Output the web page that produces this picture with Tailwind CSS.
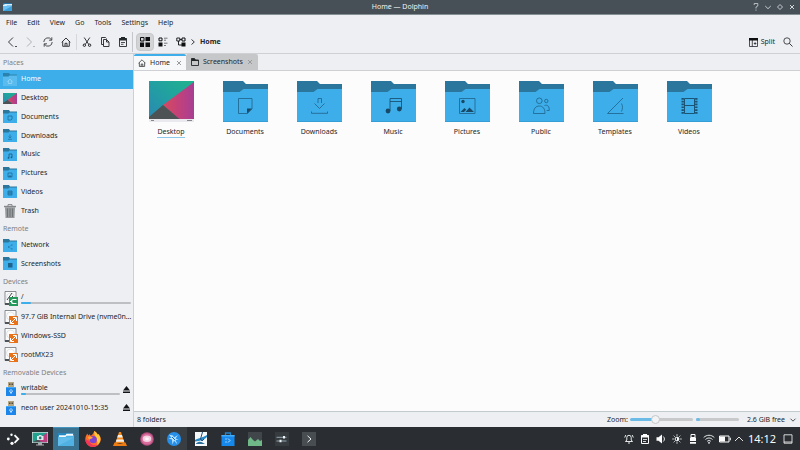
<!DOCTYPE html>
<html lang="en">
<head>
  <meta charset="UTF-8" />
  <meta name="viewport" content="width=device-width, initial-scale=1.0" />
  <title>Home — Dolphin</title>
  <script src="https://cdn.jsdelivr.net/npm/@tailwindcss/browser@4"></script>
</head>
<body class="h-screen flex flex-col overflow-hidden bg-[#eeeff2] font-['Noto_Sans',sans-serif] text-[7px] leading-[10px] text-[#232629]">

  <!-- shared icons -->
  <svg class="w-0 h-0 shrink-0">
    <linearGradient id="sky" x1="0" y1="1" x2="1" y2="0">
      <stop offset="0" stop-color="#2b86b4" />
      <stop offset=".5" stop-color="#229fa2" />
      <stop offset="1" stop-color="#1fb48c" />
    </linearGradient>
    <linearGradient id="dusk" x1="0" y1="0" x2="1" y2="0">
      <stop offset="0" stop-color="#d64a5f" />
      <stop offset=".5" stop-color="#c34179" />
      <stop offset="1" stop-color="#a73f94" />
    </linearGradient>
    <symbol id="folder" viewBox="0 0 45 41">
      <path d="M0 0h20l3 3h22v10H0z" fill="#2a769c" />
      <path d="M0 11h16.500l4-3H45v33H0z" fill="#3daee9" />
      <path d="M0 40.300h45v.7H0z" fill="#3498cd" />
    </symbol>
    <symbol id="folder-small" viewBox="0 0 14 13">
      <path d="M0 0h6l1 1.500h7V5H0z" fill="#2a769c" />
      <path d="M0 3.500h5.500l1-1H14V13H0z" fill="#3daee9" />
    </symbol>
    <symbol id="wallpaper" viewBox="0 0 45 41">
      <path d="M0 0h45v41H0z" fill="url(#sky)" />
      <path d="M45 1v38H31L14 24z" fill="url(#dusk)" />
      <path d="M14 24l17 14.500H0V36z" fill="#4d5254" />
      <path d="M0 38h45v3H0z" fill="#e9e9ee" />
      <path d="M2 39.500h3M38 39.500h5" stroke="#85888c" />
    </symbol>
    <symbol id="drive" viewBox="0 0 14 15">
      <path d="M1 .5h11v13H1z" fill="#fcfcfc" stroke="#6d7276" stroke-width=".8" />
      <path d="M1 12h11v2H1z" fill="#4d5357" />
      <circle cx="6.500" cy="6" r="4" fill="none" stroke="#d6d8da" stroke-width=".7" />
    </symbol>
    <symbol id="unmounted" viewBox="0 0 14 15">
      <use href="#drive" />
      <path d="M5 6h9v9H5z" fill="#e8721a" />
      <path d="M9 7.500h3.500V11M6.500 10v3.500H10M12 8l-5 5" fill="none" stroke="#fff" stroke-width="1" />
    </symbol>
    <symbol id="usb" viewBox="0 0 10 14">
      <path d="M2 0h6v5H2z" fill="#b3a582" />
      <path d="M3 1.500h1.500V3H3zM5.500 1.500H7V3H5.500z" fill="#514a39" />
      <path d="M0 5h10v9H0z" fill="#1d86ea" />
      <path d="M0 5h10v1H0z" fill="#46a9f5" />
      <path d="M5 7v5M3.500 8.500v1L5 11l1.500-1.500v-1" fill="none" stroke="#d5ecff" stroke-width=".8" />
    </symbol>
    <symbol id="eject" viewBox="0 0 7 7">
      <path d="M3.500 0L7 4.500H0zM0 5.500h7V7H0z" fill="#111416" />
    </symbol>
    <symbol id="house" viewBox="0 0 10 10">
      <path d="M.7 5.300L5 1l4.300 4.300M1.700 4.500v4.800h6.600V4.500M4 9V6.300h2V9" fill="none" stroke="currentColor" stroke-width=".9" />
    </symbol>
    <symbol id="close" viewBox="0 0 6 6">
      <path d="M1 1l4 4M5 1L1 5" fill="none" stroke="currentColor" stroke-width=".8" />
    </symbol>
  </svg>

  <!-- title bar -->
  <header class="h-[15px] shrink-0 grid grid-cols-[1fr_auto_1fr] items-center bg-[#475057] border-b border-[#859095] text-[#eff0f1] px-[3px]">
    <svg class="w-[9px] h-2" viewBox="0 0 9 8"><path d="M0 0h9v8H0z" fill="#3b9fdc" /><path d="M0 0h9v2H0z" fill="#2574a3" /><path d="M2 1h7v1.500H4L3.500 3H0V2z" fill="#d9f0fd" /><path d="M0 3h9L0 8z" fill="#68c1f2" /></svg>
    <h1>Home — Dolphin</h1>
    <div class="flex justify-end gap-[2px] text-[#d2d6d8]">
      <button aria-label="Help" class="w-[10px] h-[10px]"><svg viewBox="0 0 10 10"><path d="M3.200 3V1.500h3.600V4L5 5v1.500M5 7.500v1.200" fill="none" stroke="currentColor" stroke-width=".8" /></svg></button>
      <button aria-label="Minimize" class="w-[10px] h-[10px]"><svg viewBox="0 0 10 10"><path d="M2.200 4L5 6.700 7.800 4" fill="none" stroke="currentColor" stroke-width=".9" /></svg></button>
      <button aria-label="Maximize" class="w-[10px] h-[10px]"><svg viewBox="0 0 10 10"><path d="M5 2.500L7.500 5 5 7.500 2.500 5z" fill="none" stroke="currentColor" stroke-width=".9" /></svg></button>
      <button aria-label="Close" class="w-[10px] h-[10px]"><svg viewBox="0 0 10 10"><path d="M3 3l4 4M7 3L3 7" fill="none" stroke="currentColor" stroke-width="1" /></svg></button>
    </div>
  </header>

  <!-- menu bar -->
  <nav class="h-4 shrink-0 flex items-center gap-[10px] px-[6px]">
    <button>File</button>
    <button>Edit</button>
    <button>View</button>
    <button>Go</button>
    <button>Tools</button>
    <button>Settings</button>
    <button>Help</button>
  </nav>

  <!-- toolbar -->
  <div class="h-[23px] shrink-0 flex items-center justify-between border-b border-[#cfd0d3] px-[3px]">
    <div class="flex items-center">
      <button aria-label="Back" class="w-[18px] flex justify-center"><svg class="w-3 h-3" viewBox="0 0 12 12"><path d="M7 1.500L2.500 6 7 10.500" fill="none" stroke="currentColor" stroke-width=".9" /><path d="M9 10l1 1 1-1" fill="none" stroke="currentColor" stroke-width=".8" /></svg></button>
      <button aria-label="Forward" class="w-[18px] flex justify-center text-[#a4a7a9]"><svg class="w-3 h-3" viewBox="0 0 12 12"><path d="M3 1.500L7.500 6 3 10.500" fill="none" stroke="currentColor" stroke-width=".9" /><path d="M9 10l1 1 1-1" fill="none" stroke="currentColor" stroke-width=".8" /></svg></button>
      <button aria-label="Reload" class="w-[18px] flex justify-center"><svg class="w-[10px] h-[10px]" viewBox="0 0 10 10"><path d="M.8 5A4.200 4.200 0 0 1 8.500 2.700M9.200 5a4.200 4.200 0 0 1-7.700 2.300M8.800.3v2.900H6M1.200 9.700V6.800H4" fill="none" stroke="currentColor" stroke-width=".8" /></svg></button>
      <button aria-label="Home" class="w-[18px] flex justify-center"><svg class="w-[10px] h-[10px]"><use href="#house" /></svg></button>
      <span class="w-px h-4 bg-[#d6d7da] mx-px"></span>
      <button aria-label="Cut" class="w-[18px] flex justify-center"><svg class="w-[10px] h-[10px]" viewBox="0 0 10 10"><path d="M2.200.5l4.600 7M7.800.5l-4.600 7" fill="none" stroke="currentColor" stroke-width=".9" /><circle cx="2.400" cy="8.200" r="1.200" fill="none" stroke="currentColor" /><circle cx="7.600" cy="8.200" r="1.200" fill="none" stroke="currentColor" /></svg></button>
      <button aria-label="Copy" class="w-[18px] flex justify-center"><svg class="w-[10px] h-[10px]" viewBox="0 0 10 10"><path d="M3.500 7.500h-2v-7h4l1 1M3.500 2.500h3l2.500 2.500v4.500H3.500zM6.500 2.500V5H9" fill="none" stroke="currentColor" stroke-width=".9" /></svg></button>
      <button aria-label="Paste" class="w-[18px] flex justify-center"><svg class="w-[10px] h-[10px]" viewBox="0 0 10 10"><path d="M1.500 1.500h7v8h-7z" fill="none" stroke="currentColor" stroke-width=".9" /><path d="M1.500 1H3V0h4v1h1.500v2.500h-7z" fill="currentColor" /><path d="M3 5.500h4M3 7.300h2.500" stroke="currentColor" stroke-width=".8" /></svg></button>
      <span class="w-px h-5 bg-[#c4c6c9] mr-[3px]"></span>
      <button aria-label="Icons" class="w-[18px] h-[18px] flex items-center justify-center rounded-sm bg-[#d2d3d5] border border-[#c7c8ca]"><svg class="w-[10px] h-[10px]" viewBox="0 0 10 10"><path d="M5.500 0H10v4H5.500zM0 5.500h4V10H0zM5.500 5.500H10V10H5.500z" fill="#0d0f11" /><path d="M.5.5h3.500v3.500H.5z" fill="none" stroke="#0d0f11" /></svg></button>
      <button aria-label="Compact" class="w-[18px] flex justify-center"><svg class="w-[10px] h-[10px]" viewBox="0 0 10 10"><path d="M1 1h3v2.800H1z" fill="none" stroke="#0d0f11" /><path d="M.5 5.500h4v4h-4z" fill="#0d0f11" /><path d="M6 1.200h3.500M6 3.200h2M6 6.200h3.500M6 8.500h2" stroke="#54585b" stroke-width=".8" /></svg></button>
      <button aria-label="Tree" class="w-[18px] flex justify-center"><svg class="w-[10px] h-[10px]" viewBox="0 0 10 10"><path d="M.8 1h3v3h-3zM2.500 4v4H6M3.800 2.500H6" fill="none" stroke="#0d0f11" stroke-width=".9" /><path d="M6 1h3v3H6z" fill="none" stroke="#0d0f11" /><path d="M5.500 5.500h4v4h-4z" fill="#0d0f11" /></svg></button>
      <svg class="w-[6px] h-[6px] mr-1" viewBox="0 0 6 6"><path d="M1.500.5L4.300 3 1.500 5.500" fill="none" stroke="currentColor" stroke-width=".9" /></svg>
      <a href="#" class="font-bold">Home</a>
    </div>
    <div class="flex items-center gap-2 pr-1">
      <button class="flex items-center gap-[3px]">
        <svg class="w-[9px] h-[9px]" viewBox="0 0 9 9"><path d="M.5.5h8v8h-8zM3.300 2v6.500M4.800 5.500h2.600M6.100 4.200v2.600" fill="none" stroke="#232629" stroke-width=".8" /><path d="M0 0h9v2.500H0z" fill="#0d0f11" /></svg>
        Split
      </button>
      <button aria-label="Search" class="w-[10px] h-[10px]"><svg viewBox="0 0 10 10"><circle cx="4" cy="4" r="3.200" fill="none" stroke="currentColor" stroke-width=".8" /><path d="M6.300 6.300l3.200 3.200" stroke="currentColor" stroke-width=".9" /></svg></button>
    </div>
  </div>

  <div class="flex-1 min-h-0 flex">
    <!-- places panel -->
    <aside class="w-[134px] shrink-0 border-r border-[#cfd0d3]">
      <h2 class="h-4 pt-1 px-[3px] text-[#7d8184]">Places</h2>
      <ul class="h-[150px] grid auto-rows-fr">
        <li class="grid"><a href="#" class="flex items-center gap-1 px-[3px] bg-[#3daee9] text-[#fcfcfc]">
          <svg class="w-[14px] h-[13px]" viewBox="0 0 14 13"><path d="M0 0h6l1 1.500h7V5H0z" fill="#2a82af" /><path d="M0 3.500h5.500l1-1H14V13H0z" fill="#59bbee" /><path d="M4.500 8.500L7 6.300l2.500 2.200M5.300 8v2.500h3.400V8" fill="none" stroke="#a6ddf8" stroke-width=".7" /></svg>Home</a></li>
        <li class="grid"><a href="#" class="flex items-center gap-1 px-[3px]">
          <svg class="w-[14px] h-[11px]" viewBox="0 0 14 11"><path d="M0 0h14v11H0z" fill="url(#sky)" /><path d="M14 0v11H9.500L4.500 7z" fill="url(#dusk)" /><path d="M4.500 7l5 4H0v-1z" fill="#4d5254" /></svg>Desktop</a></li>
        <li class="grid"><a href="#" class="flex items-center gap-1 px-[3px]">
          <svg class="w-[14px] h-[13px]" viewBox="0 0 14 13"><use href="#folder-small" /><path d="M5 6h4v3L8 10H5z" fill="none" stroke="#1f6c97" stroke-width=".8" /></svg>Documents</a></li>
        <li class="grid"><a href="#" class="flex items-center gap-1 px-[3px]">
          <svg class="w-[14px] h-[13px]" viewBox="0 0 14 13"><use href="#folder-small" /><path d="M7 5.500v3M5.500 7.500L7 9l1.500-1.500M5 10.300h4" fill="none" stroke="#1f6c97" stroke-width=".7" /></svg>Downloads</a></li>
        <li class="grid"><a href="#" class="flex items-center gap-1 px-[3px]">
          <svg class="w-[14px] h-[13px]" viewBox="0 0 14 13"><use href="#folder-small" /><path d="M6 9.500V6h3v3" fill="none" stroke="#1a5b80" stroke-width=".8" /><circle cx="5.500" cy="9.800" r=".9" fill="#1a5b80" /><circle cx="8.500" cy="9.300" r=".9" fill="#1a5b80" /></svg>Music</a></li>
        <li class="grid"><a href="#" class="flex items-center gap-1 px-[3px]">
          <svg class="w-[14px] h-[13px]" viewBox="0 0 14 13"><use href="#folder-small" /><path d="M5 6h4v4H5z" fill="none" stroke="#1f6c97" stroke-width=".8" /><path d="M5 10l2-2 2 2z" fill="#1f6c97" /></svg>Pictures</a></li>
        <li class="grid"><a href="#" class="flex items-center gap-1 px-[3px]">
          <svg class="w-[14px] h-[13px]" viewBox="0 0 14 13"><use href="#folder-small" /><path d="M5 6h4v4H5zM5 8h4M6 6v4M8 6v4" fill="none" stroke="#1f6c97" stroke-width=".8" /></svg>Videos</a></li>
        <li class="grid"><a href="#" class="flex items-center gap-1 px-[3px]">
          <svg class="w-[14px] h-[14px]" viewBox="0 0 14 14"><path d="M5 2V.6h4V2" fill="none" stroke="#84888a" /><path d="M1 1.800h12v1.500H1z" fill="#84888a" /><path d="M2 3.300h10L11.500 14h-9z" fill="#96999b" /><path d="M4.500 4.500v8.500M7 4.500v8.500M9.500 4.500v8.500" stroke="#65696b" stroke-width=".8" /></svg>Trash</a></li>
      </ul>

      <h2 class="h-4 pt-1 px-[3px] text-[#7d8184]">Remote</h2>
      <ul class="h-[37px] grid auto-rows-fr">
        <li class="grid"><a href="#" class="flex items-center gap-1 px-[3px]">
          <svg class="w-[14px] h-[13px]" viewBox="0 0 14 13"><use href="#folder-small" /><path d="M9 6L5.500 8 9 10" fill="none" stroke="#2a82af" stroke-width=".6" /><path d="M8.500 5.500h1v1h-1zM5 7.500h1v1H5zM8.500 9.500h1v1h-1z" fill="#1f6c97" /></svg>Network</a></li>
        <li class="grid"><a href="#" class="flex items-center gap-1 px-[3px]">
          <svg class="w-[14px] h-[13px]" viewBox="0 0 14 13"><use href="#folder-small" /><path d="M5 6h4.500v4.500H5z" fill="#1d648c" /></svg>Screenshots</a></li>
      </ul>

      <h2 class="h-4 pt-1 px-[3px] text-[#7d8184]">Devices</h2>
      <ul class="h-[75px] grid auto-rows-fr">
        <li class="grid"><a href="#" class="flex items-center gap-[3px] pl-1 pr-[2px]">
          <svg class="w-[14px] h-[15px] shrink-0" viewBox="0 0 14 15"><use href="#drive" /><path d="M3 9l5-7M5 9l4-4" stroke="#31363b" stroke-width=".9" /><path d="M5 6h9v9H5z" fill="#23995a" /><path d="M12.500 8.500H9.500a2 2 0 0 0 0 4h3M6 10.500h1.500" fill="none" stroke="#fff" stroke-width="1.200" /></svg>
          <span class="flex-1">/<span class="block h-[2px] rounded-full bg-[#bdbfc2]"><span class="block h-full rounded-full bg-[#3daee9]" style="width: 9%"></span></span></span></a></li>
        <li class="grid"><a href="#" class="min-w-0 flex items-center gap-[3px] pl-1">
          <svg class="w-[14px] h-[15px] shrink-0"><use href="#unmounted" /></svg><span class="whitespace-nowrap">97.7 GiB Internal Drive (nvme0n…</span></a></li>
        <li class="grid"><a href="#" class="flex items-center gap-[3px] pl-1">
          <svg class="w-[14px] h-[15px]"><use href="#unmounted" /></svg>Windows-SSD</a></li>
        <li class="grid"><a href="#" class="flex items-center gap-[3px] pl-1">
          <svg class="w-[14px] h-[15px]"><use href="#unmounted" /></svg>rootMX23</a></li>
      </ul>

      <h2 class="h-4 pt-1 px-[3px] text-[#7d8184]">Removable Devices</h2>
      <ul class="h-[37px] grid auto-rows-fr">
        <li class="flex items-center gap-[3px] pl-[6px] pr-[3px]">
          <a href="#" class="flex-1 flex items-center gap-[5px]"><svg class="w-[10px] h-[14px]"><use href="#usb" /></svg>
          <span class="flex-1">writable<span class="block h-[2px] rounded-full bg-[#bdbfc2]"><span class="block h-full rounded-full bg-[#3daee9]" style="width: 5%"></span></span></span></a>
          <button aria-label="Eject writable"><svg class="w-[7px] h-[7px]"><use href="#eject" /></svg></button></li>
        <li class="flex items-center gap-[3px] pl-[6px] pr-[3px]">
          <a href="#" class="flex-1 flex items-center gap-[5px]"><svg class="w-[10px] h-[14px]"><use href="#usb" /></svg>neon user 20241010-15:35</a>
          <button aria-label="Eject neon user"><svg class="w-[7px] h-[7px]"><use href="#eject" /></svg></button></li>
      </ul>
    </aside>

    <main class="flex-1 min-w-0 flex flex-col">
      <!-- tabs -->
      <div class="h-[17px] shrink-0 flex border-b border-[#cfd0d3]">
        <div class="flex items-center gap-1 px-1 bg-[#f7f8f9] border-t-2 border-[#3daee9] rounded-t-xs">
          <button class="flex items-center gap-1"><svg class="w-2 h-2"><use href="#house" /></svg>Home</button>
          <button aria-label="Close Home tab" class="ml-[2px]"><svg class="w-[6px] h-[6px] text-[#7d8184]"><use href="#close" /></svg></button>
        </div>
        <div class="flex items-center gap-1 px-[5px] bg-[#c6c7c9] rounded-t-xs">
          <button class="flex items-center gap-1"><svg class="w-2 h-2" viewBox="0 0 8 8"><path d="M.5 7.500v-7h3l1 1.500h3v5.500z" fill="none" stroke="currentColor" stroke-width=".9" /><path d="M.5.5h3l1 1.500h3v1H3L2.500 3h-2z" fill="currentColor" /></svg>Screenshots</button>
          <button aria-label="Close Screenshots tab"><svg class="w-[6px] h-[6px] text-[#8b8e91]"><use href="#close" /></svg></button>
        </div>
      </div>

      <!-- files -->
      <div class="flex-1 bg-[#fcfcfc] pt-[10px] flex flex-wrap content-start">
        <a href="#" class="w-[74px] flex flex-col items-center gap-[5px]"><svg class="w-[45px] h-[41px]"><use href="#wallpaper" /></svg><span class="border-b border-[#8cc9ea]">Desktop</span></a>
        <a href="#" class="w-[74px] flex flex-col items-center gap-[5px]"><svg class="w-[45px] h-[41px]" viewBox="0 0 45 41"><use href="#folder" /><path d="M15.500 17.500h13.500v10.500l-4.500 4.500h-9z" fill="none" stroke="#1f6189" stroke-width=".8" /><path d="M29 27.500l-5 5v-5z" fill="#184a68" /></svg><span>Documents</span></a>
        <a href="#" class="w-[74px] flex flex-col items-center gap-[5px]"><svg class="w-[45px] h-[41px]" viewBox="0 0 45 41"><use href="#folder" /><path d="M21 22v-4.500h3.500V22M17.500 22.500l5 5 5-5M14.500 30.500v1.800h16v-1.800" fill="none" stroke="#1f6189" stroke-width=".8" /></svg><span>Downloads</span></a>
        <a href="#" class="w-[74px] flex flex-col items-center gap-[5px]"><svg class="w-[45px] h-[41px]" viewBox="0 0 45 41"><use href="#folder" /><path d="M19 30V17.500h11.500V28M19 20.500h11.500" fill="none" stroke="#1a5376" stroke-width=".9" /><circle cx="17" cy="30" r="2.400" fill="#184a68" /><circle cx="28.300" cy="28" r="2.400" fill="#184a68" /></svg><span>Music</span></a>
        <a href="#" class="w-[74px] flex flex-col items-center gap-[5px]"><svg class="w-[45px] h-[41px]" viewBox="0 0 45 41"><use href="#folder" /><path d="M14.500 17.500h15.500v15h-15.500z" fill="none" stroke="#1f6189" stroke-width=".8" /><circle cx="18" cy="20.500" r="1.700" fill="#184a68" /><path d="M15.500 31l4-4 1.700 1.700L19 31zM20.500 31l4-4.500L29 31z" fill="#184a68" /></svg><span>Pictures</span></a>
        <a href="#" class="w-[74px] flex flex-col items-center gap-[5px]"><svg class="w-[45px] h-[41px]" viewBox="0 0 45 41"><use href="#folder" /><g fill="none" stroke="#1f6189" stroke-width=".8"><circle cx="20.300" cy="19.800" r="2.800" /><path d="M14.500 32.500c0-5 2.300-7.500 5.800-7.500s5.700 2.500 5.700 7.500z" /><circle cx="27.300" cy="20" r="1.700" /><path d="M25.500 24.500c3.200-1 5 1 4.700 5h-2.500" /></g></svg><span>Public</span></a>
        <a href="#" class="w-[74px] flex flex-col items-center gap-[5px]"><svg class="w-[45px] h-[41px]" viewBox="0 0 45 41"><use href="#folder" /><path d="M30 17L14.500 32.500H30.500M28.500 22.500c1.300 2.500 1.300 5 0 8" fill="none" stroke="#1f6189" stroke-width=".8" /></svg><span>Templates</span></a>
        <a href="#" class="w-[74px] flex flex-col items-center gap-[5px]"><svg class="w-[45px] h-[41px]" viewBox="0 0 45 41"><use href="#folder" /><path d="M17.500 17.500h10v15h-10zM17.500 24.500h10" fill="none" stroke="#184a68" stroke-width=".9" /><path d="M15.700 17v16M29.300 17v16" stroke="#1a5376" stroke-width="2.400" stroke-dasharray="1.700 1.100" /></svg><span>Videos</span></a>
      </div>

      <!-- status bar -->
      <footer class="h-4 shrink-0 flex items-center border-t border-[#c3cacd] px-[3px]">
        <span class="flex-1">8 folders</span>
        <label for="zoom" class="mr-[2px]">Zoom:</label>
        <input id="zoom" type="range" min="0" max="100" value="39" class="w-[63px] h-[3px] appearance-none rounded-full bg-linear-to-r from-[#6cbbe6] from-40% to-[#c7c9cb] to-40% [&::-webkit-slider-thumb]:appearance-none [&::-webkit-slider-thumb]:w-[9px] [&::-webkit-slider-thumb]:h-[9px] [&::-webkit-slider-thumb]:rounded-full [&::-webkit-slider-thumb]:bg-[#f2f3f4] [&::-webkit-slider-thumb]:border [&::-webkit-slider-thumb]:border-[#c3c6c8]" />
        <span class="ml-[3px] mr-2 w-[43px] h-[3px] rounded-full bg-[#c7c9cb]"><span class="block h-full rounded-full bg-[#6cbbe6]" style="width: 9%"></span></span>
        <span>2.6 GiB free</span>
        <button aria-label="Disk space details" class="ml-1 w-2"><svg class="w-2 h-2" viewBox="0 0 8 8"><path d="M1.500 2.700L4 5.200l2.500-2.500" fill="none" stroke="currentColor" stroke-width=".8" /></svg></button>
      </footer>
    </main>
  </div>

  <!-- taskbar -->
  <div class="h-[23px] shrink-0 flex justify-between bg-[#2a2e32] text-[#fcfcfc]">
    <div class="flex">
      <button aria-label="Application Launcher" class="w-[26px] flex items-center justify-center"><svg class="w-[14px] h-[14px]" viewBox="0 0 14 14"><path d="M8.500 3.200L12.300 7 8.500 10.800" fill="none" stroke="#fcfcfc" stroke-width="1.800" /><circle cx="5.500" cy="2.700" r="1.200" fill="#fcfcfc" /><circle cx="2.300" cy="7" r="1.400" fill="#fcfcfc" /><circle cx="6" cy="11.300" r="1.600" fill="#fcfcfc" /></svg></button>
      <button aria-label="Screenshot" class="w-[27px] flex items-center justify-center"><svg class="w-4 h-[14px]" viewBox="0 0 16 14"><path d="M0 0h16v11H0z" fill="#dcdfe0" /><path d="M.7.7h14.600v9.600H.7z" fill="#20a28e" /><path d="M15.300.7v9.600H9L6 7z" fill="#bb3e80" /><path d="M6 7l3 3.300H.7z" fill="#4d5357" /><path d="M5 4h1.500l.7-1h2l.7 1h1.600v4H5z" fill="#e4e8ea" /><circle cx="8.200" cy="5.900" r="1.300" fill="#2d7774" /><path d="M6 11h4v1.500h2v1H4v-1h2z" fill="#a8acae" /></svg></button>
      <button aria-label="Dolphin" class="w-[26px] flex items-center justify-center bg-[#39718f] border-t border-[#4596bf]"><svg class="w-4 h-[13px]" viewBox="0 0 16 13"><path d="M0 0h16v13H0z" fill="#2788c1" /><path d="M0 3.500h7l1-1.500h8v11H0z" fill="#4fb2e3" /><path d="M1 2.200h6.500L8.500.8H15v2H8.500L7.500 4H1z" fill="#f4f9fb" /><path d="M0 4.500h16L0 13z" fill="#62bdea" /></svg></button>
      <button aria-label="Firefox" class="w-[27px] flex items-center justify-center"><svg class="w-4 h-4" viewBox="0 0 16 16"><path d="M8 16A7.700 7.700 0 0 1 .3 8.300c0-2 .8-4.400 2.200-5.800l.5 2 1.700-1.300.8 1.600C7 4.500 8.700 2 9.200 0c2.500 1.200 3 3 3.500 3.800l.5-.8c1.700 1.500 2.600 3.500 2.600 5.500A7.700 7.700 0 0 1 8 16z" fill="#ff6d2c" /><path d="M9.200 0c2.500 1.200 3 3 3.500 3.800l.5-.8c3 3 3.200 8-1 11C13 10 11.500 6 9.500 4z" fill="#ffcb35" /><path d="M.3 8.300C.5 13 4 16 8 16c2 0 4-1 5-2-4 1-7.500 0-8.500-4z" fill="#f2365a" /><circle cx="8.200" cy="8.700" r="3.600" fill="#7b45d2" /><path d="M3 6c2-1 3 0 5 .5-1 1.500-2.500 1-3.300 2C3.500 8 3 7 3 6z" fill="#ffa534" /></svg></button>
      <button aria-label="VLC" class="w-[27px] flex items-center justify-center"><svg class="w-[14px] h-[14px]" viewBox="0 0 14 14"><path d="M6 0h2l3.500 11h-9z" fill="#f58a1b" /><path d="M5 3h4l.8 2.500H4.200zM3.500 7.500h7l.7 2.200H2.800z" fill="#f1eee9" /><path d="M1.500 10.500H3c1 1.500 7 1.500 8 0h1.500L14 14H0z" fill="#ef7c13" /></svg></button>
      <button aria-label="Image Viewer" class="w-[27px] flex items-center justify-center"><svg class="w-[14px] h-[14px]" viewBox="0 0 14 14"><circle cx="7" cy="7" r="6.800" fill="#b64e80" /><circle cx="7" cy="7" r="5.600" fill="#d96d9d" /><ellipse cx="7" cy="6.800" rx="4.200" ry="3.200" fill="#f3d3e1" /><ellipse cx="7" cy="6.800" rx="2" ry="1.500" fill="#fdf4f8" /></svg></button>
      <button aria-label="KDE neon" class="w-[27px] flex items-center justify-center bg-[#393e42]"><svg class="w-[14px] h-[14px]" viewBox="0 0 14 14"><circle cx="7" cy="7" r="7" fill="#268fe8" /><path d="M2 2.800l4 .7 1 2 4-2.500-2.500 3.500 3 1-3 .5 2 4.500-3.500-4-1.500 4-.5-5-3.500-1 3-.8z" fill="#bce4ff" /><path d="M5 5l3 3" stroke="#1665b4" /></svg></button>
      <button aria-label="Text Editor" class="w-[27px] flex items-center justify-center"><svg class="w-3 h-[14px]" viewBox="0 0 12 14"><path d="M0 0h12v14H0z" fill="#f7f8f9" /><path d="M0 8c4-2 7-2 12-5v2C9 8 5 9 0 9.500z" fill="#2489c6" /><path d="M7.500 0L5.500 7l1.500 2 2-2" fill="none" stroke="#1c4f81" stroke-width="1" /><path d="M1 11.500c3-3 6-2 9 .5H1z" fill="#2c6e9c" /></svg></button>
      <button aria-label="Discover" class="w-[27px] flex items-center justify-center"><svg class="w-[14px] h-[14px]" viewBox="0 0 14 14"><path d="M4.500 4V1h5v3" fill="none" stroke="#2980c4" stroke-width="1.300" /><path d="M.5 3h13v11H.5z" fill="#1788eb" /><path d="M.5 3h13v1.500H.5z" fill="#42adf8" /><path d="M7 6.500l2 2-2 2" fill="none" stroke="#b9e0fd" /><circle cx="5" cy="7" r=".7" fill="#b9e0fd" /><circle cx="5" cy="10" r=".7" fill="#b9e0fd" /></svg></button>
      <button aria-label="System Monitor" class="w-[27px] flex items-center justify-center"><svg class="w-[14px] h-[14px]" viewBox="0 0 14 14"><path d="M0 0h14v14H0z" fill="#41464a" /><path d="M0 8l2.500-3L5 8l2 1.500L10 7l2 2 2-1v6H0z" fill="#6eb987" /></svg></button>
      <button aria-label="System Settings" class="w-[27px] flex items-center justify-center"><svg class="w-[14px] h-[14px]" viewBox="0 0 14 14"><path d="M0 0h14v14H0z" fill="#363b3f" /><path d="M1.500 5.300h10M1.500 9h10" stroke="#93a7b2" stroke-width="1" /><path d="M8 4h2v2.500H8zM4.500 7.800h2v2.500h-2z" fill="#f1f3f4" /></svg></button>
      <button aria-label="Konsole" class="w-[27px] flex items-center justify-center"><svg class="w-[14px] h-[14px]" viewBox="0 0 14 14"><path d="M0 0h14v14H0z" fill="#484d51" /><path d="M5.500 3.800L9 7l-3.500 3.200" fill="none" stroke="#f1f3f4" stroke-width="1" /></svg></button>
    </div>

    <div class="flex items-center">
      <button aria-label="Notifications" class="w-4 flex justify-center"><svg class="w-[10px] h-[10px]" viewBox="0 0 10 10"><path d="M2.800 6V3.500a2.200 2.200 0 0 1 4.400 0V6L8.500 7.500h-7zM4 9h2M.7 3.500L1.800 1M9.300 3.500L8.200 1" fill="none" stroke="currentColor" stroke-width=".9" /></svg></button>
      <button aria-label="Clipboard" class="w-4 flex justify-center"><svg class="w-[10px] h-[10px]" viewBox="0 0 10 10"><path d="M1.500 1.500h7v8h-7z" fill="none" stroke="currentColor" /><path d="M1.500 1H3V0h4v1h1.500v2.500h-7z" fill="currentColor" /><path d="M3 5.500h4M3 7.500h3" stroke="currentColor" stroke-width=".8" /></svg></button>
      <button aria-label="Volume" class="w-4 flex justify-center"><svg class="w-[10px] h-[10px]" viewBox="0 0 10 10"><path d="M.5 3.200h2L6 .5v9L2.500 6.800h-2z" fill="currentColor" /><path d="M7.300 2.500c1.500 1.500 1.500 3.500 0 5" fill="none" stroke="currentColor" stroke-width=".9" /></svg></button>
      <button aria-label="Brightness" class="w-4 flex justify-center"><svg class="w-[10px] h-[10px]" viewBox="0 0 10 10"><circle cx="5" cy="5" r="1.900" fill="none" stroke="currentColor" /><path d="M5 3.100a1.900 1.900 0 0 1 0 3.800z" fill="currentColor" /><path d="M5 .3v1.500M5 8.200v1.500M.3 5h1.500M8.200 5h1.500M1.700 1.700l1 1M7.300 7.300l1 1M1.700 8.300l1-1M7.300 2.700l1-1" stroke="currentColor" stroke-width=".9" /></svg></button>
      <button aria-label="Removable devices" class="w-4 flex justify-center"><svg class="w-[10px] h-[10px]" viewBox="0 0 10 10"><path d="M3 .5h4v3H3z" fill="none" stroke="currentColor" /><path d="M2 3.500h6V7H2zM2 8h6v1.800H2z" fill="currentColor" /></svg></button>
      <button aria-label="Network" class="w-4 flex justify-center"><svg class="w-3 h-[10px]" viewBox="0 0 12 10"><path d="M.7 3.500c3-3 7.600-3 10.600 0M2.500 5.500c2-2 5-2 7 0M4.200 7.300c1-1 2.600-1 3.600 0" fill="none" stroke="currentColor" stroke-width=".9" /><circle cx="6" cy="8.800" r=".9" fill="currentColor" /></svg></button>
      <button aria-label="Battery" class="w-4 flex justify-center"><svg class="w-3 h-2" viewBox="0 0 12 8"><path d="M.5 1h9.500v6H.5zM11.300 2.700v2.600" fill="none" stroke="currentColor" /><path d="M1 1.500h5v5H1z" fill="currentColor" /></svg></button>
      <button aria-label="Show hidden icons" class="w-3 flex justify-center"><svg class="w-[10px] h-[10px]" viewBox="0 0 10 10"><path d="M1 7l4-4 4 4" fill="none" stroke="currentColor" stroke-width=".9" /></svg></button>
      <time class="ml-[3px] mr-[7px] text-[11px] leading-none">14:12</time>
      <button aria-label="Show desktop" class="w-[10px] mr-[7px]"><svg class="w-[10px] h-[10px]" viewBox="0 0 10 10"><path d="M1 .8h8v8.400H1zM1 8h8" fill="none" stroke="currentColor" stroke-width=".8" /></svg></button>
    </div>
  </div>
</body>
</html>
